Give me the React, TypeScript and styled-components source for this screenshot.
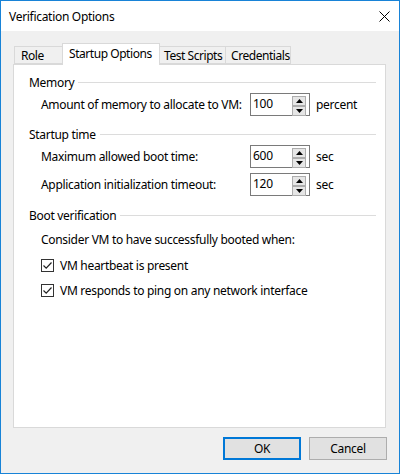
import React from "react";
import styled, { createGlobalStyle } from "styled-components";

const GlobalStyle = createGlobalStyle`
  html, body {
    margin: 0;
    padding: 0;
    background: #ffffff;
  }
  body {
    font-family: "Noto Sans", "Liberation Sans", sans-serif;
    font-size: 12px;
    letter-spacing: -0.3px;
    color: #000;
  }
`;

const Window = styled.div`
  width: 400px;
  height: 474px;
  box-sizing: border-box;
  border: 1px solid #1883d7;
  background: #f0f0f0;
  display: flex;
  flex-direction: column;
`;

const TitleBar = styled.div`
  height: 30px;
  background: #ffffff;
  display: flex;
  align-items: center;
  justify-content: space-between;
  padding: 0 9px 0 8px;
`;

const Title = styled.span`
  font-size: 12px;
`;

const Body = styled.div`
  flex: 1;
  padding: 12px 13px 0 12px;
  display: flex;
  flex-direction: column;
`;

const TabRow = styled.div`
  display: flex;
  align-items: flex-end;
  height: 21px;
  padding-left: 1px;
  position: relative;
  z-index: 1;
`;

const Tab = styled.div<{ $active?: boolean; $w: number; $pl?: number }>`
  box-sizing: border-box;
  width: ${(p) => p.$w}px;
  height: ${(p) => (p.$active ? "22px" : "18px")};
  margin-bottom: ${(p) => (p.$active ? "-1px" : "0")};
  margin-left: -1px;
  padding: ${(p) => (p.$active ? "0 0 3px" : "0")};
  padding-left: ${(p) => p.$pl ?? 6}px;
  border: 1px solid #d9d9d9;
  border-bottom: ${(p) => (p.$active ? "none" : "1px solid #d9d9d9")};
  background: ${(p) => (p.$active ? "#ffffff" : "#f0f0f0")};
  letter-spacing: -0.45px;
  display: flex;
  align-items: center;
  white-space: nowrap;
  overflow: hidden;
  position: relative;
  z-index: ${(p) => (p.$active ? 2 : 1)};
  &:first-child {
    margin-left: 0;
  }
`;

const Panel = styled.div`
  box-sizing: border-box;
  height: 364px;
  background: #ffffff;
  border: 1px solid #d9d9d9;
  padding: 8px 9px 0 15px;
  display: flex;
  flex-direction: column;
`;

const SectionHeader = styled.div<{ $mt?: number }>`
  height: 18px;
  margin-top: ${(p) => p.$mt ?? 0}px;
  display: flex;
  align-items: center;
  gap: 4px;
  &::after {
    content: "";
    flex: 1;
    border-top: 1px solid #dcdcdc;
  }
`;

const FieldRow = styled.div<{ $mt?: number }>`
  margin-top: ${(p) => p.$mt ?? 0}px;
  margin-left: 12px;
  display: grid;
  grid-template-columns: 203px 60px auto;
  column-gap: 6px;
  align-items: center;
  height: 23px;
  white-space: nowrap;
`;

const SpinBox = styled.div`
  box-sizing: border-box;
  width: 60px;
  height: 23px;
  border: 1px solid #7a7a7a;
  background: #ffffff;
  display: flex;
  align-items: flex-start;
  justify-content: space-between;
  padding: 1px 3px 0 2px;
  line-height: 18px;
`;

const SpinButtons = styled.div`
  display: flex;
  flex-direction: column;
  margin-top: 1px;
`;

const SpinButton = styled.div`
  box-sizing: border-box;
  width: 14px;
  height: 10px;
  border: 1px solid #adadad;
  background: #e6e6e6;
  display: flex;
  align-items: center;
  justify-content: center;
`;

const Text = styled.div<{ $mt?: number }>`
  margin-top: ${(p) => p.$mt ?? 0}px;
  margin-left: 12px;
  height: 18px;
  display: flex;
  align-items: center;
`;

const CheckRow = styled.label<{ $mt?: number }>`
  margin-top: ${(p) => p.$mt ?? 0}px;
  margin-left: 12px;
  height: 18px;
  display: flex;
  align-items: center;
  gap: 6px;
`;

const CheckBox = styled.span`
  box-sizing: border-box;
  width: 13px;
  height: 13px;
  border: 1px solid #333333;
  background: #ffffff;
  display: flex;
  align-items: center;
  justify-content: center;
`;

const Footer = styled.div`
  display: flex;
  justify-content: flex-end;
  gap: 8px;
  padding: 9px 0 0 0;
  margin-right: -1px;
`;

const Button = styled.button<{ $default?: boolean }>`
  box-sizing: border-box;
  width: 78px;
  height: 23px;
  font-family: inherit;
  font-size: 12px;
  letter-spacing: inherit;
  color: #000;
  background: #e1e1e1;
  border: ${(p) => (p.$default ? "2px solid #0078d7" : "1px solid #adadad")};
  padding: 0;
  display: flex;
  align-items: center;
  justify-content: center;
`;

const Arrow = ({ up }: { up?: boolean }) => (
  <svg width="7" height="4" viewBox="0 0 7 4">
    <path d={up ? "M0 4 L3.5 0 L7 4 Z" : "M0 0 L3.5 4 L7 0 Z"} fill="#000" />
  </svg>
);

const Spin = ({ value }: { value: string }) => (
  <SpinBox>
    <span>{value}</span>
    <SpinButtons>
      <SpinButton>
        <Arrow up />
      </SpinButton>
      <SpinButton>
        <Arrow />
      </SpinButton>
    </SpinButtons>
  </SpinBox>
);

const Check = ({ label, mt }: { label: string; mt: number }) => (
  <CheckRow $mt={mt}>
    <CheckBox>
      <svg width="11" height="11" viewBox="0 0 11 11">
        <path d="M1.5 5.5 L4.2 8.2 L9.5 2.5" fill="none" stroke="#222" strokeWidth="1.2" />
      </svg>
    </CheckBox>
    {label}
  </CheckRow>
);

export default function App() {
  return (
    <>
      <GlobalStyle />
      <Window>
        <TitleBar>
          <Title>Verification Options</Title>
          <svg width="11" height="11" viewBox="0 0 11 11">
            <path d="M0.5 0.5 L10.5 10.5 M10.5 0.5 L0.5 10.5" stroke="#000" strokeWidth="1" />
          </svg>
        </TitleBar>
        <Body>
          <TabRow>
            <Tab $w={49}>Role</Tab>
            <Tab $w={98} $active>
              Startup Options
            </Tab>
            <Tab $w={67} $pl={4}>
              Test Scripts
            </Tab>
            <Tab $w={66} $pl={5}>
              Credentials
            </Tab>
          </TabRow>
          <Panel>
            <SectionHeader>Memory</SectionHeader>
            <FieldRow $mt={2}>
              <span>Amount of memory to allocate to VM:</span>
              <Spin value="100" />
              <span>percent</span>
            </FieldRow>
            <SectionHeader $mt={9}>Startup time</SectionHeader>
            <FieldRow $mt={2}>
              <span>Maximum allowed boot time:</span>
              <Spin value="600" />
              <span>sec</span>
            </FieldRow>
            <FieldRow $mt={5}>
              <span>Application initialization timeout:</span>
              <Spin value="120" />
              <span>sec</span>
            </FieldRow>
            <SectionHeader $mt={10}>Boot verification</SectionHeader>
            <Text $mt={6}>Consider VM to have successfully booted when:</Text>
            <Check mt={8} label="VM heartbeat is present" />
            <Check mt={7} label="VM responds to ping on any network interface" />
          </Panel>
          <Footer>
            <Button $default>OK</Button>
            <Button>Cancel</Button>
          </Footer>
        </Body>
      </Window>
    </>
  );
}
